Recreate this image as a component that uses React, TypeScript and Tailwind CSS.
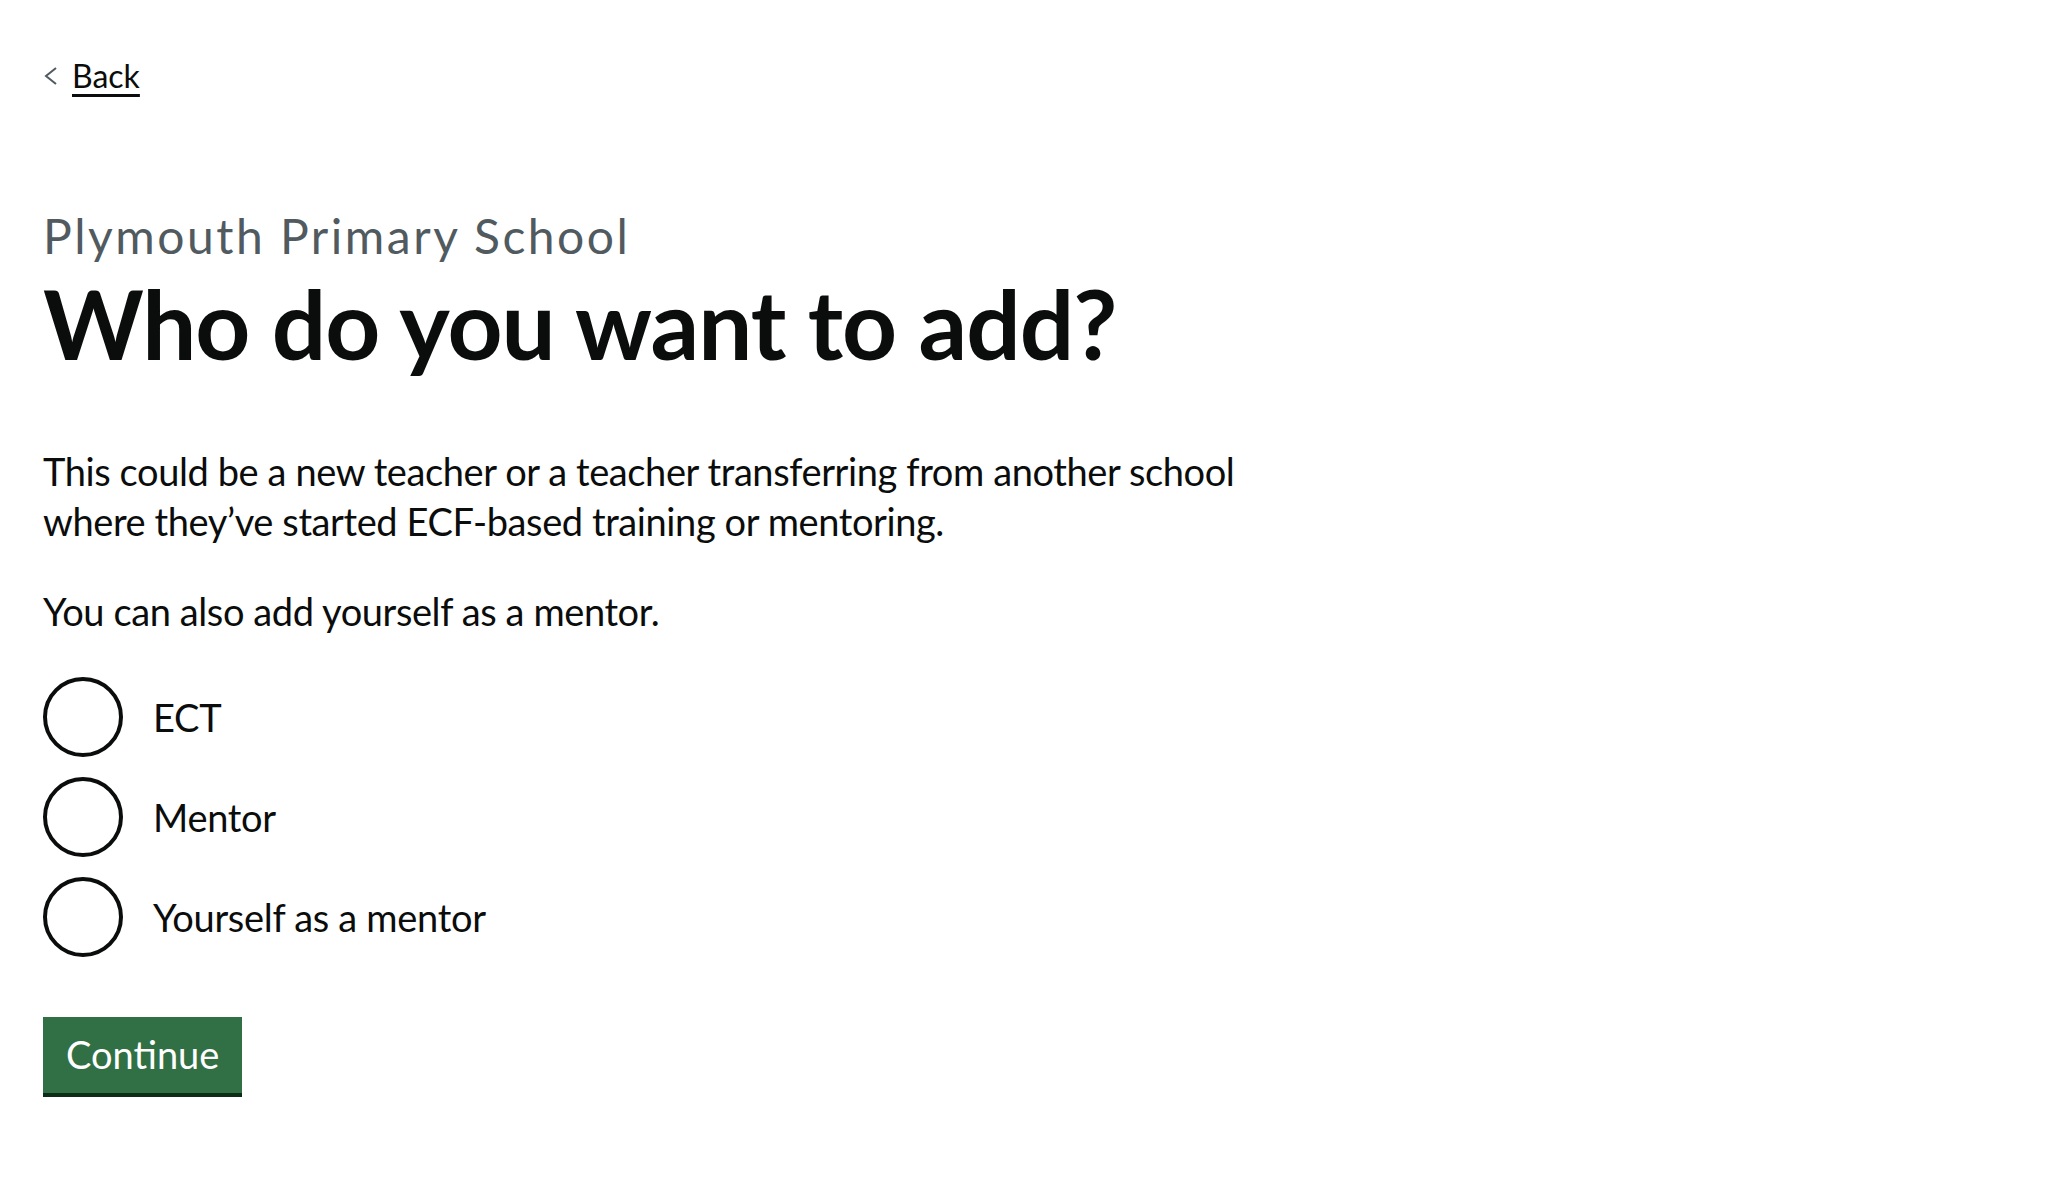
import React, { useState } from 'react';

const options = [
  { value: 'ect', label: 'ECT' },
  { value: 'mentor', label: 'Mentor' },
  { value: 'self', label: 'Yourself as a mentor' },
];

export default function App() {
  const [selected, setSelected] = useState<string | null>(null);

  return (
    <div className="min-h-screen bg-white pl-[43px] text-[#0b0c0c] [font-family:Lato,'Noto_Sans',sans-serif]">
      {/* Back link */}
      <a href="#" className="mt-[56px] flex w-fit items-center text-[32px] leading-[40px]">
        <svg width="14" height="20" viewBox="0 0 14 20" className="mr-[14px] ml-[1px]">
          <polyline points="12,2 2,10 12,18" fill="none" stroke="#505a5f" strokeWidth="2" />
        </svg>
        <span className="underline decoration-[2.5px] underline-offset-[6px]">Back</span>
      </a>

      <main className="mt-[115px] max-w-[1300px]">
        <span className="block text-[48px] leading-[50px] tracking-[2.5px] text-[#505a5f]">Plymouth Primary School</span>
        <h1 className="mt-[12px] text-[96px] font-bold leading-[100px] tracking-[-1px]">Who do you want to add?</h1>

        <p className="mt-[73px] max-w-[1250px] text-[38px] leading-[50px] tracking-[-0.4px]">
          This could be a new teacher or a teacher transferring from another school where they’ve started ECF-based training or mentoring.
        </p>
        <p className="mt-[40px] text-[38px] leading-[50px] tracking-[-0.4px]">You can also add yourself as a mentor.</p>

        {/* Radios */}
        <div className="mt-[41px] flex flex-col gap-[20px]">
          {options.map((o) => (
            <label key={o.value} className="flex h-[80px] cursor-pointer items-center">
              <input
                type="radio"
                name="who"
                className="sr-only"
                checked={selected === o.value}
                onChange={() => setSelected(o.value)}
              />
              <span className="flex h-[80px] w-[80px] shrink-0 items-center justify-center rounded-full border-[4px] border-[#0b0c0c]">
                {selected === o.value && <span className="h-[40px] w-[40px] rounded-full bg-[#0b0c0c]" />}
              </span>
              <span className="ml-[30px] text-[38px] leading-[50px] tracking-[-0.3px]">{o.label}</span>
            </label>
          ))}
        </div>

        <button className="mt-[60px] bg-[#317045] px-[23px] pt-[14px] pb-[16px] text-[38px] leading-[46px] text-white shadow-[0_4px_0_#0b2c17]">
          Continue
        </button>
      </main>
    </div>
  );
}
